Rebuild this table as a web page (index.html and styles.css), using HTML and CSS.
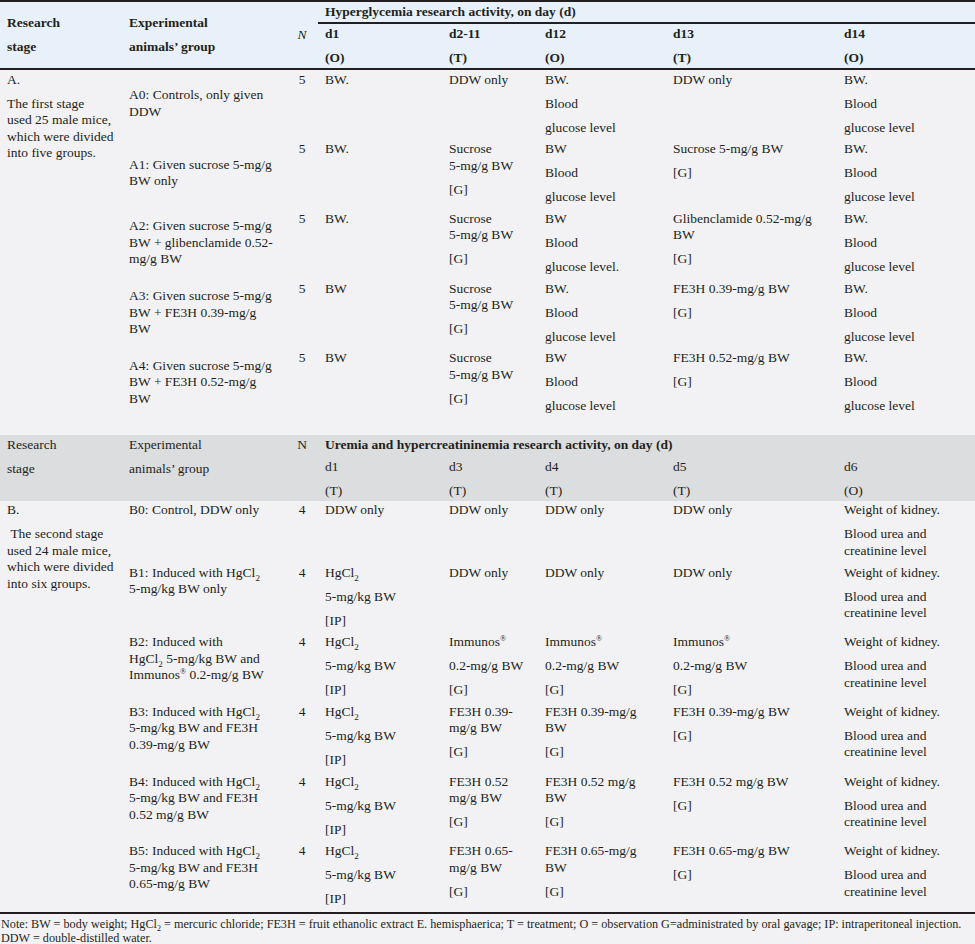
FILE: index.html
```html
<!DOCTYPE html>
<html lang="en">
<head>
<meta charset="utf-8">
<title>Research stages table</title>
<link rel="stylesheet" href="styles.css">
</head>
<body>
<table class="tbl">
  <colgroup>
    <col class="c-stage"><col class="c-group"><col class="c-n"><col class="c-d1"><col class="c-d2"><col class="c-d3"><col class="c-d4"><col class="c-d5">
  </colgroup>
  <thead>
    <tr class="ha-1">
      <th rowspan="2" class="mid stage"><p>Research</p><p>stage</p></th>
      <th rowspan="2" class="mid"><p>Experimental</p><p>animals’ group</p></th>
      <th rowspan="2" class="mid n ital">N</th>
      <th colspan="5" class="span-title">Hyperglycemia research activity, on day (d)</th>
    </tr>
    <tr class="ha-2">
      <th><p>d1</p><p>(O)</p></th>
      <th><p>d2-11</p><p>(T)</p></th>
      <th><p>d12</p><p>(O)</p></th>
      <th><p>d13</p><p>(T)</p></th>
      <th><p>d14</p><p>(O)</p></th>
    </tr>
  </thead>
  <tbody class="sec-a">
    <tr>
      <td rowspan="5" class="stage"><p>A.</p><p>The first stage<br>used 25 male mice,<br>which were divided<br>into five groups.</p></td>
      <td class="mid">A0: Controls, only given<br>DDW</td>
      <td class="n">5</td>
      <td><p>BW.</p></td>
      <td><p>DDW only</p></td>
      <td><p>BW.</p><p>Blood</p><p>glucose level</p></td>
      <td><p>DDW only</p></td>
      <td><p>BW.</p><p>Blood</p><p>glucose level</p></td>
    </tr>
    <tr>
      <td class="mid">A1: Given sucrose 5-mg/g<br>BW only</td>
      <td class="n">5</td>
      <td><p>BW.</p></td>
      <td><p>Sucrose<br>5-mg/g BW</p><p>[G]</p></td>
      <td><p>BW</p><p>Blood</p><p>glucose level</p></td>
      <td><p>Sucrose 5-mg/g BW</p><p>[G]</p></td>
      <td><p>BW.</p><p>Blood</p><p>glucose level</p></td>
    </tr>
    <tr>
      <td class="mid">A2: Given sucrose 5-mg/g<br>BW + glibenclamide 0.52-<br>mg/g BW</td>
      <td class="n">5</td>
      <td><p>BW.</p></td>
      <td><p>Sucrose<br>5-mg/g BW</p><p>[G]</p></td>
      <td><p>BW</p><p>Blood</p><p>glucose level.</p></td>
      <td><p>Glibenclamide 0.52-mg/g<br>BW</p><p>[G]</p></td>
      <td><p>BW.</p><p>Blood</p><p>glucose level</p></td>
    </tr>
    <tr>
      <td class="mid">A3: Given sucrose 5-mg/g<br>BW + FE3H 0.39-mg/g<br>BW</td>
      <td class="n">5</td>
      <td><p>BW</p></td>
      <td><p>Sucrose<br>5-mg/g BW</p><p>[G]</p></td>
      <td><p>BW.</p><p>Blood</p><p>glucose level</p></td>
      <td><p>FE3H 0.39-mg/g BW</p><p>[G]</p></td>
      <td><p>BW.</p><p>Blood</p><p>glucose level</p></td>
    </tr>
    <tr>
      <td class="mid">A4: Given sucrose 5-mg/g<br>BW + FE3H 0.52-mg/g<br>BW</td>
      <td class="n">5</td>
      <td><p>BW</p></td>
      <td><p>Sucrose<br>5-mg/g BW</p><p>[G]</p></td>
      <td><p>BW</p><p>Blood</p><p>glucose level</p></td>
      <td><p>FE3H 0.52-mg/g BW</p><p>[G]</p></td>
      <td><p>BW.</p><p>Blood</p><p>glucose level</p></td>
    </tr>
    <tr class="spacer"><td colspan="8"></td></tr>
  </tbody>
  <tbody class="head-b">
    <tr class="hb-1">
      <td rowspan="2" class="stage"><p>Research</p><p>stage</p></td>
      <td rowspan="2"><p>Experimental</p><p>animals’ group</p></td>
      <td rowspan="2" class="n">N</td>
      <td colspan="5" class="bold">Uremia and hypercreatininemia research activity, on day (d)</td>
    </tr>
    <tr class="hb-2">
      <td><p>d1</p><p>(T)</p></td>
      <td><p>d3</p><p>(T)</p></td>
      <td><p>d4</p><p>(T)</p></td>
      <td><p>d5</p><p>(T)</p></td>
      <td><p>d6</p><p>(O)</p></td>
    </tr>
  </tbody>
  <tbody class="sec-b">
    <tr>
      <td rowspan="6" class="stage"><p>B.</p><p>&nbsp;The second stage<br>used 24 male mice,<br>which were divided<br>into six groups.</p></td>
      <td>B0: Control, DDW only</td>
      <td class="n">4</td>
      <td><p>DDW only</p></td>
      <td><p>DDW only</p></td>
      <td><p>DDW only</p></td>
      <td><p>DDW only</p></td>
      <td><p>Weight of kidney.</p><p>Blood urea and<br>creatinine level</p></td>
    </tr>
    <tr>
      <td>B1: Induced with HgCl<sub>2</sub><br>5-mg/kg BW only</td>
      <td class="n">4</td>
      <td><p>HgCl<sub>2</sub></p><p>5-mg/kg BW</p><p>[IP]</p></td>
      <td><p>DDW only</p></td>
      <td><p>DDW only</p></td>
      <td><p>DDW only</p></td>
      <td><p>Weight of kidney.</p><p>Blood urea and<br>creatinine level</p></td>
    </tr>
    <tr>
      <td>B2: Induced with<br>HgCl<sub>2</sub> 5-mg/kg BW and<br>Immunos<sup>®</sup> 0.2-mg/g BW</td>
      <td class="n">4</td>
      <td><p>HgCl<sub>2</sub></p><p>5-mg/kg BW</p><p>[IP]</p></td>
      <td><p>Immunos<sup>®</sup></p><p>0.2-mg/g BW</p><p>[G]</p></td>
      <td><p>Immunos<sup>®</sup></p><p>0.2-mg/g BW</p><p>[G]</p></td>
      <td><p>Immunos<sup>®</sup></p><p>0.2-mg/g BW</p><p>[G]</p></td>
      <td><p>Weight of kidney.</p><p>Blood urea and<br>creatinine level</p></td>
    </tr>
    <tr>
      <td>B3: Induced with HgCl<sub>2</sub><br>5-mg/kg BW and FE3H<br>0.39-mg/g BW</td>
      <td class="n">4</td>
      <td><p>HgCl<sub>2</sub></p><p>5-mg/kg BW</p><p>[IP]</p></td>
      <td><p>FE3H 0.39-<br>mg/g BW</p><p>[G]</p></td>
      <td><p>FE3H 0.39-mg/g<br>BW</p><p>[G]</p></td>
      <td><p>FE3H 0.39-mg/g BW</p><p>[G]</p></td>
      <td><p>Weight of kidney.</p><p>Blood urea and<br>creatinine level</p></td>
    </tr>
    <tr>
      <td>B4: Induced with HgCl<sub>2</sub><br>5-mg/kg BW and FE3H<br>0.52 mg/g BW</td>
      <td class="n">4</td>
      <td><p>HgCl<sub>2</sub></p><p>5-mg/kg BW</p><p>[IP]</p></td>
      <td><p>FE3H 0.52<br>mg/g BW</p><p>[G]</p></td>
      <td><p>FE3H 0.52 mg/g<br>BW</p><p>[G]</p></td>
      <td><p>FE3H 0.52 mg/g BW</p><p>[G]</p></td>
      <td><p>Weight of kidney.</p><p>Blood urea and<br>creatinine level</p></td>
    </tr>
    <tr>
      <td>B5: Induced with HgCl<sub>2</sub><br>5-mg/kg BW and FE3H<br>0.65-mg/g BW</td>
      <td class="n">4</td>
      <td><p>HgCl<sub>2</sub></p><p>5-mg/kg BW</p><p>[IP]</p></td>
      <td><p>FE3H 0.65-<br>mg/g BW</p><p>[G]</p></td>
      <td><p>FE3H 0.65-mg/g<br>BW</p><p>[G]</p></td>
      <td><p>FE3H 0.65-mg/g BW</p><p>[G]</p></td>
      <td><p>Weight of kidney.</p><p>Blood urea and<br>creatinine level</p></td>
    </tr>
  </tbody>
</table>
<p class="note">Note: BW = body weight; HgCl<sub>2</sub> = mercuric chloride; FE3H = fruit ethanolic extract E. hemisphaerica; T = treatment; O = observation G=administrated by oral gavage; IP: intraperitoneal injection.<br>DDW = double-distilled water.</p>
</body>
</html>
```

FILE: styles.css
```css
html, body {
  margin: 0;
  padding: 0;
  background: #f2f2f4;
}

body {
  font-family: "Liberation Serif", "Times New Roman", serif;
  font-size: 13.5px;
  line-height: 16.5px;
  color: #231f20;
}

.tbl {
  width: 975px;
  table-layout: fixed;
  border-collapse: separate;
  border-spacing: 0;
  border-top: 2px solid #231f20;
  border-bottom: 2px solid #231f20;
}

.c-stage { width: 122px; }
.c-group { width: 163px; }
.c-n { width: 33px; }
.c-d1 { width: 124px; }
.c-d2 { width: 96px; }
.c-d3 { width: 128px; }
.c-d4 { width: 171px; }
.c-d5 { width: 138px; }

.tbl th,
.tbl td {
  padding: 1.5px 6px 3.7px 7px;
  text-align: left;
  vertical-align: top;
  white-space: nowrap;
  font-weight: normal;
}

.tbl p {
  margin: 0 0 7.5px;
}

.tbl p:last-child {
  margin-bottom: 0;
}

.tbl .mid {
  vertical-align: middle;
}

.tbl .n {
  text-align: center;
}

.tbl .ital {
  font-style: italic;
}

.tbl .bold {
  font-weight: bold;
}

/* Header of section A */
.tbl thead th {
  background: #e8f1f9;
  font-weight: bold;
}

.tbl thead th.ital {
  font-weight: normal;
}

.ha-1 th {
  border-bottom: 2px solid #231f20;
}

.ha-1 .span-title {
  padding: 2px 6px 1px 7px;
}

.ha-2 th {
  padding: 2px 6px 2px 7px;
  border-bottom: 2px solid #231f20;
}

.ha-1 th.mid {
  padding-top: 0;
  padding-bottom: 0;
}

/* spacer between sections */
.spacer td {
  height: 16.5px;
  padding: 0;
}

/* Header of section B */
.head-b td {
  background: #dcdddf;
}

.hb-1 td {
  padding-top: 2.2px;
  padding-bottom: 3.2px;
}

.hb-1 td[rowspan] {
  padding-bottom: 1.6px;
}

.hb-2 td {
  padding-top: 2px;
  padding-bottom: 1.6px;
}

sub {
  font-size: 9px;
  line-height: 0;
  vertical-align: -4px;
}

sup {
  font-size: 8px;
  line-height: 0;
  vertical-align: 5px;
}

.note {
  margin: 3.3px 0 0 1px;
  font-size: 12.2px;
  line-height: 14px;
  white-space: nowrap;
}

.note sub {
  font-size: 8px;
  vertical-align: -3px;
}
```
